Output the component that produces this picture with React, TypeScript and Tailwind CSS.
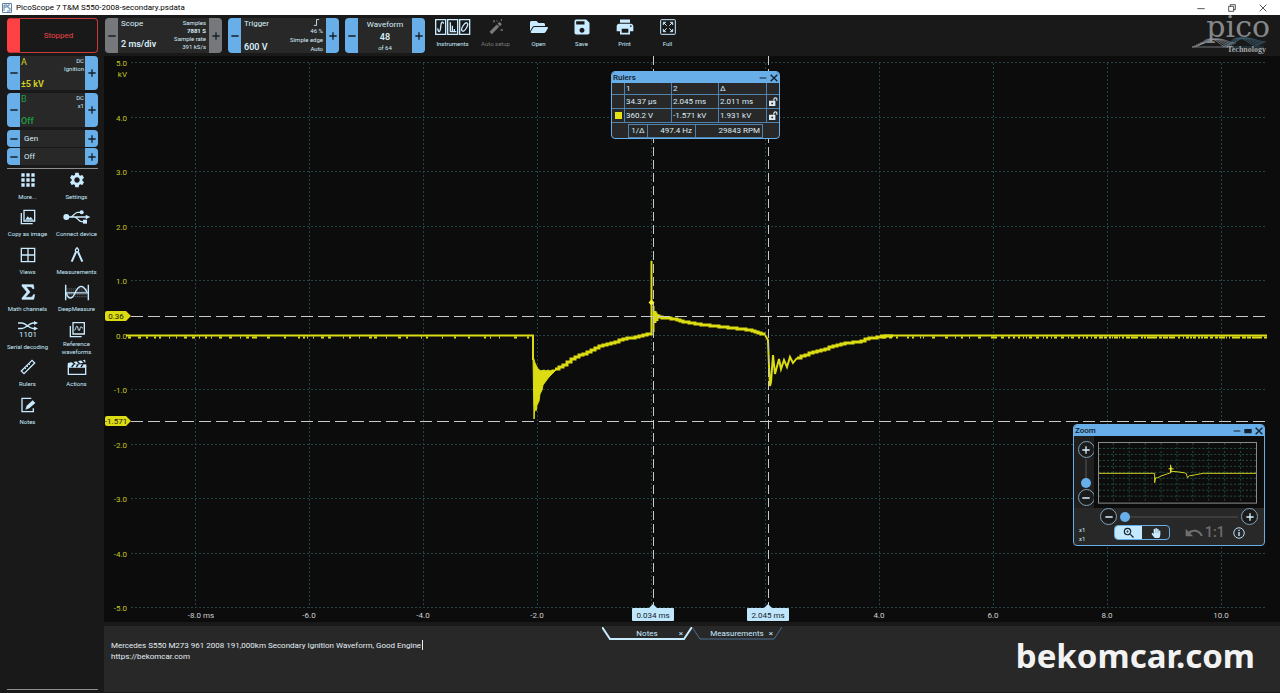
import type { ReactNode } from 'react';
import { MdApps, MdPrint, MdSave, MdSettings, MdUndo, MdZoomIn } from 'react-icons/md';
import { FaFolderOpen, FaHandPaper } from 'react-icons/fa';

type Point = [number, number];

/* ---------- Plot data ---------- */

const PX_PER_MS = 57;
const PX_PER_KV = 54.5;
const xOf = (ms: number) => 547 + ms * PX_PER_MS;
const yOf = (kv: number) => 279.5 - kv * PX_PER_KV;

const X_TICKS = [-8, -6, -4, -2, 0, 2, 4, 6, 8, 10];
const Y_TICKS = [5, 4, 3, 2, 1, 0, -1, -2, -3, -4, -5];

const CHARGE: Point[] = [
  [451, 313], [456, 311], [468, 302], [476, 299], [484, 296], [493, 291],
  [503, 288], [516, 284], [521, 282], [533, 281], [543, 278], [548, 277],
];

const BURN: Point[] = [
  [549, 258], [554, 261], [560, 262], [570, 263], [580, 266], [592, 268],
  [610, 270], [626, 272], [638, 273], [649, 275], [656, 278], [661, 279],
];

const RINGING: Point[] = [
  [661, 279], [664, 284], [665, 310], [666, 330], [667, 326], [669, 299], [671, 318],
  [675, 303], [677, 313], [680, 304], [683, 311], [686, 301], [689, 307], [693, 302],
];

const DECAY: Point[] = [
  [693, 302], [703, 298], [716, 294], [726, 291], [743, 287], [753, 286], [761, 283], [776, 281], [790, 279.5],
];

// Turn a rough curve into the staircase an 8 bit converter gives
function steps(points: Point[], dx: number) {
  let d = `M${points[0][0]},${points[0][1]}`;
  let i = 0;
  for (let x = points[0][0]; x <= points[points.length - 1][0]; x += dx) {
    while (i < points.length - 2 && x > points[i + 1][0]) i++;
    const [x1, y1] = points[i];
    const [x2, y2] = points[i + 1];
    const y = y1 + ((y2 - y1) * (x - x1)) / (x2 - x1);
    d += `H${x}V${Math.round(y)}`;
  }
  return d;
}

// Small dips under the zero line
function noise(from: number, to: number, gap: number) {
  let d = '';
  let seed = 7;
  for (let x = from; x < to; ) {
    seed = (seed * 73 + 41) % 101;
    const w = 1 + (seed % 3);
    d += `M${x},281.5h${w}`;
    x += w + 2 + (seed % gap);
  }
  return d;
}

const line = (points: Point[]) => 'M' + points.map((p) => p.join(',')).join('L');

function ScopePlot() {
  return (
    <svg viewBox="0 0 1176 566" className="block h-full w-full font-['Roboto',sans-serif] text-[8px]">
      <g stroke="#224444" strokeDasharray="2 2">
        {X_TICKS.map((t) => (
          <line key={t} x1={Math.round(xOf(t)) + 0.5} x2={Math.round(xOf(t)) + 0.5} y1={7} y2={552} />
        ))}
        {Y_TICKS.map((t) => (
          <line key={t} x1={27} x2={1163} y1={Math.round(yOf(t)) - 0.5} y2={Math.round(yOf(t)) - 0.5} />
        ))}
      </g>

      <g fill="#c3c62a" textAnchor="end">
        {Y_TICKS.map((t) => (
          <text key={t} x={23} y={yOf(t) + 3}>{t.toFixed(1)}</text>
        ))}
        <text x={23} y={21}>kV</text>
      </g>
      <g fill="#d0d0d0" textAnchor="middle">
        {X_TICKS.filter((t) => t !== 0 && t !== 2).map((t) => (
          <text key={t} x={t === -8 ? xOf(t) + 6 : xOf(t)} y={562}>{t === -8 ? '-8.0 ms' : t.toFixed(1)}</text>
        ))}
      </g>

      {/* Trace */}
      <g fill="none" stroke="#dbdc12" strokeWidth={2}>
        <path d="M22,279.5H429V304" />
        <path d={noise(24, 150, 7) + noise(150, 425, 13)} />
        <path
          d="M429,300L430,363L431,350L432,355L433,349L435,345L436,338L438,334L439,329L442,325L445,321L449,317L452,314L448,314L446,315L444,314L442,315L440,314L437,315L434,313L431,307Z"
          fill="#dbdc12"
          strokeWidth={1}
        />
        <path d={steps(CHARGE, 4)} strokeWidth={3} />
        <path d="M547.5,279V205" />
        <path d="M549.5,276V250M551.5,267V255M553.5,265V258" />
        <path d={steps(BURN, 3)} strokeWidth={3} />
        <path d={line(RINGING)} />
        <path d={steps(DECAY, 4)} strokeWidth={3} />
        <path d="M776,279.5H1163" />
        <path d={noise(778, 890, 9) + noise(890, 1163, 3) + noise(990, 1163, 2)} />
      </g>
      <path d="M547.5,243.5l3,3l-3,3l-3,-3z" fill="#f2f32a" />

      {/* Rulers */}
      <g stroke="#c9c9c9">
        <path d="M549.5,0V550M664.5,0V550" strokeDasharray="9 4" />
        <path d="M27,260.5H1163M27,365.5H1163" strokeDasharray="12 5" />
      </g>
      {[{ y: 260, label: '0.36' }, { y: 365, label: '-1.571' }].map((r) => (
        <g key={r.label}>
          <path d={`M3,${r.y - 5}h19l5,5l-5,5h-19q-2,0 -2,-2v-6q0,-2 2,-2z`} fill="#dbdc12" />
          <text x={12} y={r.y + 3} textAnchor="middle" fill="#20200a">{r.label}</text>
        </g>
      ))}
      {[{ x: 549, label: '0.034 ms' }, { x: 664, label: '2.045 ms' }].map((r) => (
        <g key={r.label}>
          <path d={`M${r.x - 5},553l5,-5l5,5z`} fill="#bfe6fb" />
          <rect x={r.x - 21} y={552} width={42} height={13} rx={1} fill="#bfe6fb" />
          <text x={r.x} y={562} textAnchor="middle" fill="#16222c">{r.label}</text>
        </g>
      ))}
    </svg>
  );
}

/* ---------- Icons ---------- */

function Icon({ children, className = 'h-5 w-5', box = '0 0 24 24' }: { children: ReactNode; className?: string; box?: string }) {
  return (
    <svg viewBox={box} className={className} fill="none" stroke="currentColor" strokeWidth={2}>
      {children}
    </svg>
  );
}

const CopyIcon = () => (
  <Icon className="h-4 w-4">
    <path d="M6 2h16v16H6zM2 6v16h17" />
    <path d="M8 16l3.500-5 2.500 3 2-2 4 4z" fill="currentColor" stroke="none" />
  </Icon>
);

const UsbIcon = () => (
  <Icon className="h-4 w-7" box="0 0 42 24">
    <circle cx="5" cy="12" r="4.500" fill="currentColor" stroke="none" />
    <path d="M5 12h30M11 12c5 0 6-7 11-7h4M17 12c5 0 6 7 11 7h3" />
    <path d="M34 8.500l7 3.500-7 3.500z" fill="currentColor" stroke="none" />
    <circle cx="28" cy="5" r="3" fill="currentColor" stroke="none" />
    <path d="M30 16h6v6h-6z" fill="currentColor" stroke="none" />
  </Icon>
);

const ViewsIcon = () => (
  <Icon className="h-4 w-4">
    <path d="M2 2h20v20H2zM12 2v20M2 12h20" />
  </Icon>
);

const CompassIcon = () => (
  <Icon className="h-4 w-4">
    <circle cx="12" cy="5" r="2.500" />
    <path d="M12 0v3" />
    <path d="M10.500 7.500L4 22M13.500 7.500L20 22" strokeWidth={3} />
  </Icon>
);

const SigmaIcon = () => (
  <Icon className="h-4 w-4">
    <path d="M3 1h17l1 6h-2c-.5-2-1.500-3-4-3H9l6 8-7 8h7c3 0 4-1 5-4h2l-1.500 7H3v-2l7.500-9L3 3z" fill="currentColor" stroke="currentColor" strokeWidth={1} />
  </Icon>
);

const DeepMeasureIcon = () => (
  <Icon className="h-[17px] w-[26px]" box="0 0 36 24">
    <path d="M3 7h30M3 10h30M3 15h30M3 18h30" strokeWidth={1} strokeDasharray="2 1" opacity={0.5} />
    <path d="M2 1v22M34 1v22M2 12.500h32" />
    <path d="M3 13c3 9 8 9 12 0s10-15 17-2" />
  </Icon>
);

const SerialIcon = () => (
  <svg viewBox="0 0 20 17" className="h-[17px] w-5 font-['Roboto',sans-serif] text-[8px]" fill="none" stroke="currentColor" strokeWidth={1.500}>
    <path d="M0 2h4c4 0 7 5.500 11 5.500h2M0 7.500h4c4 0 7-5.500 11-5.500h2" />
    <path d="M16 0l4 2-4 2zM16 5.500l4 2-4 2z" fill="currentColor" stroke="none" />
    <text x="10" y="16" textAnchor="middle" fill="currentColor" stroke="none">1101</text>
  </svg>
);

const ReferenceIcon = () => (
  <Icon className="h-4 w-4">
    <path d="M6 1h17v17H6zM2 6v16h17" />
    <path d="M8 12c2 2 2-6 4-6s1 7 3 7 1-6 3-6 1 3 3 2" strokeWidth={1.500} />
  </Icon>
);

const RulersIcon = () => (
  <Icon className="h-4 w-4">
    <path d="M2 18L18 2l4 4L6 22z" />
    <path d="M7 13l2 2M10 10l2 2M13 7l2 2" strokeWidth={1.500} />
  </Icon>
);

const ClapperIcon = () => (
  <Icon className="h-4 w-5" box="0 0 30 24">
    <path d="M2 12h26v11H2z" />
    <path d="M1 6l26-5 1 4-26 5z" fill="currentColor" stroke="none" />
    <path d="M1 8h28v4H1z" fill="currentColor" stroke="none" />
    <path d="M8 4l4 4M15 3l4 4M22 1.500l4 4M10 8l-3 4M17 8l-3 4M24 8l-3 4" stroke="#191919" />
  </Icon>
);

const NotesIcon = () => (
  <Icon className="h-4 w-4">
    <path d="M17 2H3v20h17v-5" />
    <path d="M8 19l2-6 9-8 4 4-9 8z" fill="currentColor" stroke="none" />
  </Icon>
);

const InstrumentsIcon = () => (
  <Icon className="h-4 w-9" box="0 0 54 24">
    <path d="M1 1h15v22H1zM19 1h15v22H19zM37 1h15v22H37z" />
    <path d="M4 14c1 7 4 6 4.500-2S11 3 13 7M23 5v14h9M26 19v-9M29 19v-4" />
    <ellipse cx="44.500" cy="12" rx="3" ry="7" transform="rotate(30 44.500 12)" />
  </Icon>
);

const WandIcon = () => (
  <Icon className="h-4 w-4">
    <path d="M4 21L15 10" strokeWidth={5} />
    <path d="M16 9l3-3" strokeWidth={5} />
    <path d="M8 2l2 3M8 5l2-3M19 15l3 3M22 15l-3 3M20 0v3M13 2l1 2" strokeWidth={1.500} />
  </Icon>
);

const FullIcon = () => (
  <Icon className="h-4 w-4">
    <rect x="1" y="1" width="22" height="22" rx="1" strokeWidth={1.500} />
    <path d="M5 9V5h4M15 5h4v4M19 15v4h-4M9 19H5v-4M5 5l5 5M19 5l-5 5M19 19l-5-5M5 19l5-5" strokeWidth={1.500} />
  </Icon>
);

const UnlockIcon = () => (
  <Icon className="h-[9px] w-[9px]">
    <path d="M0 10h17v14H0z" fill="currentColor" stroke="none" />
    <path d="M13 10V6c0-5 8-5 8 0v4" strokeWidth={3} />
    <circle cx="8.500" cy="17" r="2.500" fill="#282828" stroke="none" />
  </Icon>
);

const PlusIcon = () => <Icon className="h-2 w-2"><path d="M12 1v22M1 12h22" strokeWidth={4} /></Icon>;
const MinusIcon = () => <Icon className="h-2 w-2"><path d="M1 12h22" strokeWidth={4} /></Icon>;

const PicoWave = () => (
  <svg viewBox="0 0 78 12" className="h-3 w-[78px]" fill="none" strokeWidth={0.7}>
    {[0, 2, 4, 6, 8].map((n) => (
      <g key={n}>
        <path d={`M${n},${11 - n / 2}c10,0 10,-${8 - n / 2} 18,-${8 - n / 2}s10,${8 - n / 2} 18,${8 - n / 2}`} stroke="#8f979c" />
        <path d={`M${30 + n},${11 - n / 2}c8,0 8,-${9 - n / 2} 16,-${9 - n / 2}s10,${7 - n / 2} 20,${8 - n / 2}`} stroke="#3f6478" />
      </g>
    ))}
    <path d="M0,11H42" stroke="#8f979c" />
    <path d="M38,11H72" stroke="#34566a" />
  </svg>
);

/* ---------- Controls ---------- */

interface StepperProps {
  label: string;
  muted?: boolean;
  children: ReactNode;
}

function Stepper({ label, muted, children }: StepperProps) {
  const button = `flex w-[13px] shrink-0 items-center justify-center text-[#14202b] ${muted ? 'bg-[#77787b]' : 'bg-[#68aee8]'}`;
  return (
    <div className="flex h-full w-full overflow-hidden rounded bg-[#282828]">
      <button aria-label={`${label} down`} className={button}><MinusIcon /></button>
      <div className="min-w-0 flex-1">{children}</div>
      <button aria-label={`${label} up`} className={button}><PlusIcon /></button>
    </div>
  );
}

function ToolButton({ icon, label, disabled }: { icon: ReactNode; label: string; disabled?: boolean }) {
  return (
    <button className={`flex w-[43px] flex-col items-center text-[6px] ${disabled ? 'text-[#7a7a7a]' : 'text-[#c9ebff]'}`}>
      <span className="flex h-[18px] items-center">{icon}</span>
      <span className="mt-1 leading-[8px] whitespace-nowrap">{label}</span>
    </button>
  );
}

const SIDE_TOOLS = [
  { label: 'More...', icon: <MdApps className="h-5 w-5" /> },
  { label: 'Settings', icon: <MdSettings className="h-[18px] w-[18px]" /> },
  { label: 'Copy as image', icon: <CopyIcon /> },
  { label: 'Connect device', icon: <UsbIcon /> },
  { label: 'Views', icon: <ViewsIcon /> },
  { label: 'Measurements', icon: <CompassIcon /> },
  { label: 'Math channels', icon: <SigmaIcon /> },
  { label: 'DeepMeasure', icon: <DeepMeasureIcon /> },
  { label: 'Serial decoding', icon: <SerialIcon /> },
  { label: 'Reference waveforms', icon: <ReferenceIcon /> },
  { label: 'Rulers', icon: <RulersIcon /> },
  { label: 'Actions', icon: <ClapperIcon /> },
  { label: 'Notes', icon: <NotesIcon /> },
];

function Sidebar() {
  return (
    <aside className="flex w-[104px] shrink-0 flex-col bg-[#191919]">
      <div className="flex flex-col gap-[3px] pr-[6px] pl-[7px]">
        <div className="h-[34px]">
          <Stepper label="Channel A">
            <div className="flex h-full justify-between px-px">
              <div className="flex flex-col justify-between text-[9px] leading-[12px] text-[#d3d526]">
                <span>A</span>
                <span className="font-semibold">±5 kV</span>
              </div>
              <div className="pt-px text-right text-[6px] leading-[8px] text-[#c9ebff]">DC<br />Ignition</div>
            </div>
          </Stepper>
        </div>
        <div className="h-[34px]">
          <Stepper label="Channel B">
            <div className="flex h-full justify-between px-px">
              <div className="flex flex-col justify-between text-[9px] leading-[12px] text-[#1f9a45]">
                <span>B</span>
                <span className="font-semibold">Off</span>
              </div>
              <div className="pt-px text-right text-[6px] leading-[8px] text-[#c9ebff]">DC<br />x1</div>
            </div>
          </Stepper>
        </div>
        <div className="flex h-[35px] flex-col gap-px text-[8px] leading-[17px] text-[#d9eefa]">
          <Stepper label="Generator"><span className="pl-1">Gen</span></Stepper>
          <Stepper label="Generator output"><span className="pl-1">Off</span></Stepper>
        </div>
        <hr className="border-[#8d8d8d]" />
      </div>
      <nav className="grid h-[262px] auto-rows-fr grid-cols-2 px-[3px] text-[#c9ebff]">
        {SIDE_TOOLS.map((tool) => (
          <button key={tool.label} className="flex flex-col items-center pt-px">
            <span className="flex h-5 items-center">{tool.icon}</span>
            <span className={`text-[6px] leading-[8px] ${tool.label === 'Reference waveforms' ? '' : 'mt-[3px] whitespace-nowrap'}`}>{tool.label}</span>
          </button>
        ))}
      </nav>
      <hr className="mt-auto mr-[6px] mb-[3px] ml-[7px] border-[#8d8d8d]" />
    </aside>
  );
}

function Toolbar() {
  return (
    <div className="flex h-[41px] shrink-0 items-start bg-[#191919] pt-[3px] pl-[7px]">
      <button className="h-[35px] w-[91px] rounded border border-[#c93a3d] border-l-[13px] border-l-[#fd4144] text-[8px] text-[#ee4447]">
        Stopped
      </button>
      <div className="ml-[7px] h-[35px] w-[117px]">
        <Stepper label="Timebase" muted>
          <div className="flex h-full justify-between px-[3px] text-[#d9eefa]">
            <div className="flex flex-col justify-between pb-[3px] text-[8px] leading-[12px]">
              <span>Scope</span>
              <span className="text-[9px] font-semibold whitespace-nowrap">2 ms/div</span>
            </div>
            <div className="pt-px text-right text-[6px] leading-[8px] whitespace-nowrap">
              Samples<br /><b>7881 S</b><br />Sample rate<br />391 kS/s
            </div>
          </div>
        </Stepper>
      </div>
      <div className="ml-[6px] h-[35px] w-[111px]">
        <Stepper label="Trigger level">
          <div className="flex h-full justify-between px-[3px] text-[#d9eefa]">
            <div className="flex flex-col justify-between text-[8px] leading-[12px]">
              <span>Trigger</span>
              <span className="text-[9px] font-semibold">600 V</span>
            </div>
            <div className="flex flex-col items-end pt-px text-[6px] leading-[9px] whitespace-nowrap">
              <Icon className="mr-[3px] h-[7px] w-[7px]"><path d="M3 22h9V2h9" strokeWidth={3} /></Icon>
              <span>46 %</span>
              <span>Simple edge</span>
              <span>Auto</span>
            </div>
          </div>
        </Stepper>
      </div>
      <div className="ml-[6px] h-[35px] w-20">
        <Stepper label="Waveform">
          <div className="flex h-full flex-col items-center pt-px text-[#d9eefa]">
            <span className="text-[8px] leading-[12px]">Waveform</span>
            <span className="text-[9px] leading-[12px] font-semibold">48</span>
            <span className="text-[6px] leading-[9px]">of 64</span>
          </div>
        </Stepper>
      </div>
      <div className="ml-[6px] flex">
        <ToolButton label="Instruments" icon={<InstrumentsIcon />} />
        <ToolButton label="Auto setup" icon={<WandIcon />} disabled />
        <ToolButton label="Open" icon={<FaFolderOpen className="h-[18px] w-[18px]" />} />
        <ToolButton label="Save" icon={<MdSave className="h-5 w-5" />} />
        <ToolButton label="Print" icon={<MdPrint className="h-5 w-5" />} />
        <ToolButton label="Full" icon={<FullIcon />} />
      </div>
      <div className="mr-[10px] ml-auto flex flex-col items-end text-[#85888b]">
        <span className="font-['DejaVu_Serif',serif] text-[30px] leading-[18px]">pico</span>
        <PicoWave />
        <span className="mr-1 font-['Liberation_Serif',serif] text-[8px] leading-[4px] font-bold text-[#a3a7aa]">Technology</span>
      </div>
    </div>
  );
}

/* ---------- Floating windows ---------- */

function FloatTitle({ title, children }: { title: string; children: ReactNode }) {
  return (
    <div className="flex h-[11px] items-center justify-between bg-[#68aee8] px-px text-[8px] leading-[11px] font-medium text-[#14202b]">
      <span>{title}</span>
      <span className="flex gap-[3px]">{children}</span>
    </div>
  );
}

const MinIcon = () => <Icon className="h-2 w-2"><path d="M2 12h20" strokeWidth={3} /></Icon>;
const CloseIcon = () => <Icon className="h-2 w-2"><path d="M2 2l20 20M22 2L2 22" strokeWidth={4} /></Icon>;

function RulersWindow() {
  const cell = 'border-r border-b border-[#4f82ad] px-px';
  return (
    <section className="absolute top-[15px] left-[507px] w-[169px] overflow-hidden rounded-sm border border-[#68aee8] bg-[#282828] text-[8px] text-[#dcecf5]">
      <FloatTitle title="Rulers">
        <button aria-label="Minimise rulers"><MinIcon /></button>
        <button aria-label="Close rulers"><CloseIcon /></button>
      </FloatTitle>
      <table className="w-full table-fixed border-separate border-spacing-0 text-left leading-[13px] whitespace-nowrap">
        <colgroup>
          <col className="w-[13px]" /><col className="w-[47px]" /><col className="w-[47px]" /><col /><col className="w-[12px]" />
        </colgroup>
        <thead className="leading-[11px]">
          <tr>
            <th className={cell} />
            <th className={`${cell} font-normal`}>1</th>
            <th className={`${cell} font-normal`}>2</th>
            <th className={`${cell} font-normal`}>Δ</th>
            <th className="border-b border-[#4f82ad]" />
          </tr>
        </thead>
        <tbody>
          <tr>
            <td className={cell} />
            <td className={cell}>34.37 µs</td>
            <td className={cell}>2.045 ms</td>
            <td className={cell}>2.011 ms</td>
            <td className="border-b border-[#4f82ad] pl-[2px]"><button className="block" aria-label="Unlock time rulers"><UnlockIcon /></button></td>
          </tr>
          <tr>
            <td className={cell}><span className="ml-[2px] block h-[7px] w-[7px] bg-[#e3e412]" /></td>
            <td className={cell}>360.2 V</td>
            <td className={cell}>-1.571 kV</td>
            <td className={cell}>1.931 kV</td>
            <td className="border-b border-[#4f82ad] pl-[2px]"><button className="block" aria-label="Unlock channel A rulers"><UnlockIcon /></button></td>
          </tr>
        </tbody>
      </table>
      <div className="mt-px mr-4 ml-4 flex border border-[#4f82ad] text-right leading-[12px]">
        <span className="w-[19px] border-r border-[#4f82ad] text-center">1/Δ</span>
        <span className="w-12 border-r border-[#4f82ad] pr-[3px]">497.4 Hz</span>
        <span className="flex-1 pr-[2px]">29843 RPM</span>
      </div>
    </section>
  );
}

const roundButton = 'flex h-[17px] w-[17px] shrink-0 items-center justify-center rounded-full border border-[#7fa3bd] bg-[#1b1b1b] text-[#d9f1ff]';
const thumb =
  '[&::-webkit-slider-thumb]:h-[10px] [&::-webkit-slider-thumb]:w-[10px] [&::-webkit-slider-thumb]:appearance-none [&::-webkit-slider-thumb]:rounded-full [&::-webkit-slider-thumb]:bg-[#68aee8]';

function ZoomWindow() {
  return (
    <section className="absolute right-[15px] bottom-[76px] w-[192px] overflow-hidden rounded-sm border border-[#68aee8] bg-[#282828]">
      <FloatTitle title="Zoom">
        <button aria-label="Minimise zoom"><MinIcon /></button>
        <button aria-label="Maximise zoom"><Icon className="h-2 w-2"><path d="M1 6h22v13H1z" fill="currentColor" stroke="none" /></Icon></button>
        <button aria-label="Close zoom"><CloseIcon /></button>
      </FloatTitle>
      <div className="flex">
        <div className="flex w-5 flex-col items-center gap-px bg-[#1f1f1f] pt-[5px] pl-1">
          <button aria-label="Zoom in vertically" className={roundButton}><PlusIcon /></button>
          <div className="flex h-[29px] items-center">
            <input
              type="range"
              aria-label="Vertical zoom"
              defaultValue={0}
              className={`h-[29px] w-[2px] appearance-none bg-[#3c3c3c] [direction:rtl] [writing-mode:vertical-lr] ${thumb} [&::-webkit-slider-thumb]:-ml-px`}
            />
          </div>
          <button aria-label="Zoom out vertically" className={roundButton}><MinusIcon /></button>
        </div>
        <div className="flex-1 bg-[#0c0c0c] pt-[6px] pr-[7px] pb-1 pl-1">
          <svg viewBox="0 0 160 62" className="block w-full">
            <g stroke="#24503f" strokeDasharray="2 2">
              {[1, 2, 3, 4, 5, 6, 7, 8, 9].map((n) => (
                <g key={n}>
                  <path d={`M${n * 16 - 0.5},1V61`} />
                  <path d={`M1,${n * 6 + 0.5}H159`} />
                </g>
              ))}
            </g>
            <rect x="0.5" y="0.5" width="159" height="61" fill="none" stroke="#8b8b8b" />
            <path
              d="M1,31.500H57V41L58,36L60,36L64,34L70,32L73,31V23V31L74,29.500L80,30L87,31L89,32L90,36L92,34L98,33L103,32L106,31.500H159"
              fill="none"
              stroke="#d3d526"
            />
            <path d="M71,27h5M73.500,25v5" stroke="#f2f32a" />
          </svg>
        </div>
      </div>
      <div className="flex h-[17px] items-center gap-[3px] pr-[6px] pl-[26px]">
        <button aria-label="Zoom out horizontally" className={roundButton}><MinusIcon /></button>
        <input
          type="range"
          aria-label="Horizontal zoom"
          defaultValue={0}
          className={`h-[2px] min-w-0 flex-1 appearance-none bg-[#3c3c3c] ${thumb}`}
        />
        <button aria-label="Zoom in horizontally" className={roundButton}><PlusIcon /></button>
      </div>
      <div className="flex h-5 items-start pl-[5px] text-[#6f6f6f]">
        <div className="w-[35px] text-[6px] leading-[9px] text-[#c9ebff]">x1<br />x1</div>
        <div className="flex h-[15px] w-14 overflow-hidden rounded-sm border border-[#68aee8]">
          <button aria-label="Zoom tool" className="flex flex-1 items-center justify-center bg-[#c4e9fd] text-[#14202b]"><MdZoomIn className="h-[14px] w-[14px]" /></button>
          <button aria-label="Pan tool" className="flex flex-1 items-center justify-center text-[#c9ebff]"><FaHandPaper className="h-[10px] w-[10px]" /></button>
        </div>
        <div className="flex h-[15px] items-center pl-[14px]">
          <button aria-label="Undo zoom"><MdUndo className="h-5 w-5" /></button>
          <button className="pl-px text-[14px] leading-[15px] font-medium">1:1</button>
          <button aria-label="Zoom information" className="ml-2 text-[#b4dcf5]">
            <Icon className="h-3 w-3"><circle cx="12" cy="12" r="10.500" /><path d="M12 10v8M12 5.500v2.500" strokeWidth={3} /></Icon>
          </button>
        </div>
      </div>
    </section>
  );
}

/* ---------- Bottom panel ---------- */

function PanelTab({ label, active }: { label: string; active?: boolean }) {
  return (
    <div className="relative flex h-[13px] w-[90px] items-center justify-center text-[8px] text-[#c9ebff]">
      <svg viewBox="0 0 90 13" className="absolute inset-0 h-full w-full" fill="none" stroke={active ? '#c9ebff' : '#4a6f91'} strokeWidth={active ? 2 : 1}>
        <path d="M0,0L8,12H82L90,0" />
      </svg>
      <button role="tab" aria-selected={!!active} className="relative leading-[13px]">{label}</button>
      <button aria-label={`Close ${label}`} className="absolute top-0 right-[9px] leading-[13px]">×</button>
    </div>
  );
}

function NotesPanel() {
  return (
    <section className="relative mt-1 h-[66px] shrink-0 bg-[#282828]">
      <div role="tablist" className="flex justify-center pt-px">
        <PanelTab label="Notes" active />
        <PanelTab label="Measurements" />
      </div>
      <textarea
        aria-label="Notes"
        rows={2}
        spellCheck={false}
        defaultValue={'Mercedes S550 M273 961 2008 191,000km Secondary Ignition Waveform, Good Engine\nhttps://bekomcar.com'}
        className="block w-2/3 resize-none overflow-hidden bg-transparent pl-[7px] text-[8px] leading-[11px] text-[#e4eef4] outline-none"
      />
      {/* Text cursor */}
      <span className="absolute top-[14px] left-[318px] h-[10px] w-px bg-[#e4eef4]" />
      <p className="absolute right-[25px] bottom-[14px] font-['Noto_Sans',sans-serif] text-[33px] leading-[44px] font-bold text-[#f2f2f2]">bekomcar.com</p>
    </section>
  );
}

function TitleBar() {
  return (
    <header className="flex h-[15px] shrink-0 items-center bg-white pl-[2px] text-[8px] text-black">
      <svg viewBox="0 0 10 12" className="h-3 w-[10px]" fill="none" stroke="#5c83a8">
        <path d="M.5 1.500h9v9h-9zM2 5h3V3H2v6M8 3H6v3h2v3H5" />
      </svg>
      <h1 className="ml-1">PicoScope 7 T&amp;M S550-2008-secondary.psdata</h1>
      <div className="mr-[13px] ml-auto flex gap-[23px]">
        <button aria-label="Minimise"><Icon className="h-2 w-2"><path d="M1 14h22" /></Icon></button>
        <button aria-label="Restore"><Icon className="h-2 w-2"><path d="M2 7h15v15H2zM7 7V2h15v15h-5" /></Icon></button>
        <button aria-label="Close"><Icon className="h-2 w-2"><path d="M2 2l20 20M22 2L2 22" /></Icon></button>
      </div>
    </header>
  );
}

export default function App() {
  return (
    <div className="flex h-screen flex-col overflow-hidden bg-[#191919] font-['Roboto','Noto_Sans',sans-serif]">
      <TitleBar />
      <Toolbar />
      <div className="flex min-h-0 flex-1">
        <Sidebar />
        <main className="mb-px flex min-w-0 flex-1 flex-col">
          <div className="relative min-h-0 flex-1 bg-[#0c0c0c]">
            <ScopePlot />
            <RulersWindow />
            <ZoomWindow />
          </div>
          <NotesPanel />
        </main>
      </div>
    </div>
  );
}
